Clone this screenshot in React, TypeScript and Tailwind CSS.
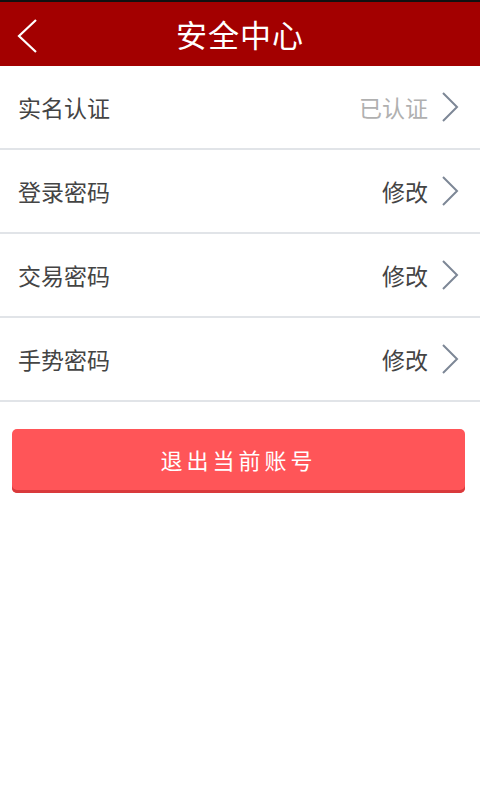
import { ReactNode } from "react";

const font = {
  fontFamily: '"Noto Sans CJK SC", "Noto Sans", sans-serif',
};

function Chevron({ className }: { className?: string }) {
  return (
    <svg width="18" height="30" viewBox="0 0 18 30" className={className}>
      <path
        d="M2 1 L16 15 L2 29"
        fill="none"
        stroke="currentColor"
        strokeWidth="2"
      />
    </svg>
  );
}

interface RowProps {
  label: string;
  value: ReactNode;
  muted?: boolean;
}

function Row({ label, value, muted }: RowProps) {
  return (
    <div className="flex h-[84px] items-center border-b-2 border-[#e1e4e8] pl-[18px] pr-[21px]">
      <span className="flex-1 text-[23px] text-[#444444]">{label}</span>
      <span
        className={
          muted
            ? "text-[23px] text-[#b0b0b0]"
            : "text-[23px] text-[#444444]"
        }
      >
        {value}
      </span>
      <Chevron className="ml-[13px] text-[#7d8796]" />
    </div>
  );
}

export default function App() {
  const rows: RowProps[] = [
    { label: "实名认证", value: "已认证", muted: true },
    { label: "登录密码", value: "修改" },
    { label: "交易密码", value: "修改" },
    { label: "手势密码", value: "修改" },
  ];

  return (
    <div className="min-h-[800px] w-[480px] bg-white" style={font}>
      <div className="h-[2px] bg-[#111111]" />
      <div className="relative flex h-[64px] items-center justify-center bg-[#a30000]">
        <button className="absolute left-[16px] top-[16px] text-white">
          <svg width="22" height="36" viewBox="0 0 22 36">
            <path
              d="M20 2 L3 18 L20 34"
              fill="none"
              stroke="currentColor"
              strokeWidth="2.2"
            />
          </svg>
        </button>
        <h1 className="text-[31px] tracking-[1px] text-white">安全中心</h1>
      </div>

      <div>
        {rows.map((r) => (
          <Row key={r.label} {...r} />
        ))}
      </div>

      <div className="pl-[12px] pr-[15px] pt-[27px]">
        <button className="flex h-[64px] w-full items-center justify-center rounded-[5px] bg-[#ff5558] pb-[3px] text-[22px] tracking-[4px] text-white shadow-[inset_0_-3px_0_#d93a3c]">
          退出当前账号
        </button>
      </div>
    </div>
  );
}
